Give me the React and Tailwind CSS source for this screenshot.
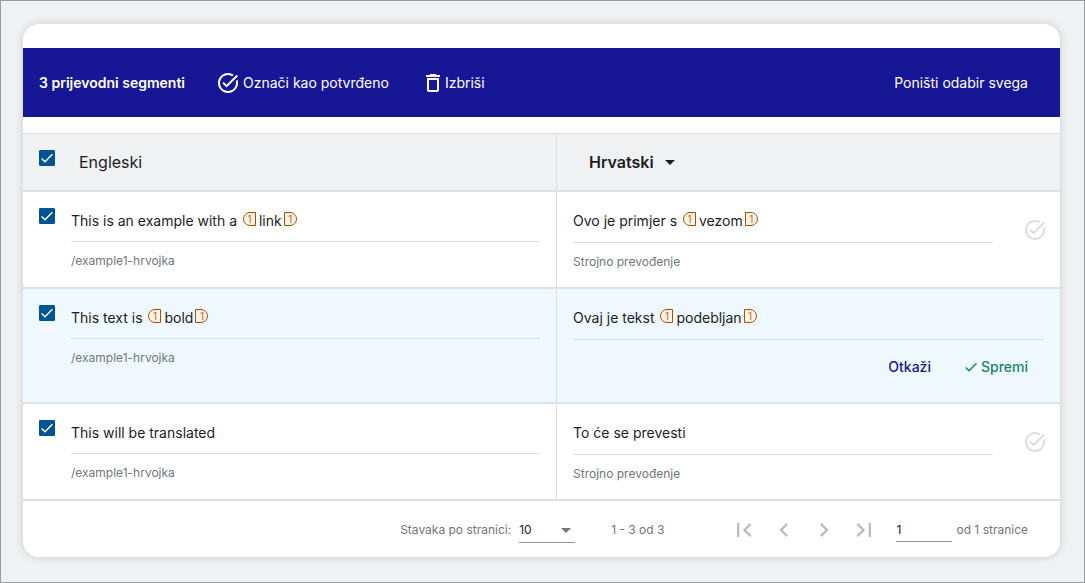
import React, { useState } from 'react';
import {
  MdTaskAlt,
  MdDeleteOutline,
  MdCheck,
  MdArrowDropDown,
  MdFirstPage,
  MdChevronLeft,
  MdChevronRight,
  MdLastPage,
} from 'react-icons/md';

const segments = [
  {
    id: 1,
    source: ['This is an example with a ', 'link'],
    target: ['Ovo je primjer s ', 'vezom'],
    path: '/example1-hrvojka',
    status: 'Strojno prevođenje',
  },
  {
    id: 2,
    source: ['This text is ', 'bold'],
    target: ['Ovaj je tekst ', 'podebljan'],
    path: '/example1-hrvojka',
    editing: true,
  },
  {
    id: 3,
    source: ['This will be translated'],
    target: ['To će se prevesti'],
    path: '/example1-hrvojka',
    status: 'Strojno prevođenje',
  },
];

function Checkbox({ label, checked, onChange }) {
  return (
    <label className="grid h-4 w-4 shrink-0 cursor-pointer">
      <input
        type="checkbox"
        aria-label={label}
        checked={checked}
        onChange={onChange}
        className="col-start-1 row-start-1 h-4 w-4 appearance-none rounded-[1px] border border-[#005493] bg-white checked:bg-[#005493]"
      />
      <svg viewBox="0 0 16 16" className="pointer-events-none col-start-1 row-start-1 h-4 w-4" fill="none" stroke="white" strokeWidth="1.4">
        <path d="M2.6 8.4 6 11.8 13.4 4.2" />
      </svg>
    </label>
  );
}

function Tag({ closing }) {
  return (
    <span
      className={`inline-flex h-[14px] w-[13px] items-center justify-center border border-[#a35200] bg-[#fef2e6] align-text-top text-[10px] leading-none text-[#b96a26] ${
        closing ? 'ml-[2px] rounded-r-full' : 'ml-[2px] mr-[3px] rounded-l-full'
      }`}
    >
      1
    </span>
  );
}

function SegmentText({ parts }) {
  const [text, tagged] = parts;
  return (
    <p className="text-sm leading-6 text-[#1b1d1f]">
      {text}
      {tagged && (
        <>
          <Tag />
          {tagged}
          <Tag closing />
        </>
      )}
    </p>
  );
}

function Row({ segment, checked, onToggle }) {
  const { source, target, path, status, editing } = segment;
  return (
    <tr className={editing ? 'bg-[#eff8ff]' : 'bg-white'}>
      <td className="border-r border-b-2 border-r-[#dcdde1] border-b-[#dfe0e4] px-4 pt-4 pb-3 align-top">
        <div className="flex gap-4">
          <Checkbox label={source.join('')} checked={checked} onChange={onToggle} />
          <div className="min-w-0 flex-1">
            <div className="border-b border-[#dcdde1] pt-px pb-2">
              <SegmentText parts={source} />
            </div>
            <p className="pt-[7px] text-xs leading-6 text-[#6f777b]">{path}</p>
          </div>
        </div>
      </td>
      <td className={`border-b-2 border-[#dfe0e4] pt-4 pb-[13px] pl-4 align-top ${editing ? 'pr-4' : 'pr-[13px]'}`}>
        <div className="flex gap-[30px]">
          <div className="min-w-0 flex-1">
            <div className="border-b border-[#dcdde1] pt-px pb-[9px]">
              <SegmentText parts={target} />
            </div>
            {status && <p className="pt-[7px] text-xs leading-6 text-[#6f777b]">{status}</p>}
            {editing && (
              <div className="flex justify-end gap-8 pt-[15px] pr-4 pb-[10px] text-sm leading-6 font-medium">
                <button type="button" className="text-[#171796]">Otkaži</button>
                <button type="button" className="flex items-center gap-0.5 text-[#17856b]">
                  <MdCheck className="h-4 w-4" />
                  Spremi
                </button>
              </div>
            )}
          </div>
          {!editing && (
            <button type="button" aria-label="Označi kao potvrđeno" className="mt-[10px] h-6 w-6 shrink-0 text-[#dcdde1]">
              <MdTaskAlt className="h-6 w-6" />
            </button>
          )}
        </div>
      </td>
    </tr>
  );
}

function PageButton({ label, icon: Icon }) {
  return (
    <button type="button" aria-label={label} className="flex h-10 w-10 items-center justify-center text-[#bdbdbd]">
      <Icon className="h-7 w-7" />
    </button>
  );
}

export default function App() {
  const [selected, setSelected] = useState([1, 2, 3]);
  const [pageSize, setPageSize] = useState('10');
  const [page, setPage] = useState('1');

  const toggle = (id) =>
    setSelected((prev) => (prev.includes(id) ? prev.filter((s) => s !== id) : [...prev, id]));
  const allSelected = selected.length === segments.length;

  return (
    <div className="min-h-screen border border-[#9b9b9b] bg-[#f0f1f3] pt-[23px] pr-6 pb-6 pl-[22px] font-['Inter',sans-serif]">
      <div className="overflow-hidden rounded-2xl bg-white pt-6 shadow-[0_0_8px_rgba(0,0,0,0.16)]">
        <div className="flex items-center bg-[#171796] pt-[23px] pr-8 pb-[22px] pl-4 text-sm leading-6 text-white">
          <span className="font-semibold">{selected.length} prijevodni segmenti</span>
          <button type="button" className="ml-[31px] flex items-center gap-[3px]">
            <MdTaskAlt className="h-6 w-6" />
            Označi kao potvrđeno
          </button>
          <button type="button" className="ml-8 flex items-center">
            <MdDeleteOutline className="h-6 w-6" />
            Izbriši
          </button>
          <button type="button" className="ml-auto" onClick={() => setSelected([])}>
            Poništi odabir svega
          </button>
        </div>

        <table className="mt-4 w-full table-fixed border-separate border-spacing-0 border-t border-[#dcdde1]">
          <colgroup>
            <col className="w-[51.5%]" />
            <col />
          </colgroup>
          <thead>
            <tr className="bg-[#f0f1f3] text-left text-base leading-6">
              <th className="border-r border-b-2 border-r-[#dcdde1] border-b-[#dfe0e4] p-4 font-normal text-[#1b1d1f]">
                <div className="flex gap-6">
                  <Checkbox
                    label="Odaberi sve"
                    checked={allSelected}
                    onChange={() => setSelected(allSelected ? [] : segments.map((s) => s.id))}
                  />
                  Engleski
                </div>
              </th>
              <th className="border-b-2 border-[#dfe0e4] px-8 py-4 font-semibold text-[#1b1d1f]">
                <button type="button" className="flex items-center gap-1">
                  Hrvatski
                  <MdArrowDropDown className="h-6 w-6" />
                </button>
              </th>
            </tr>
          </thead>
          <tbody>
            {segments.map((s) => (
              <Row key={s.id} segment={s} checked={selected.includes(s.id)} onToggle={() => toggle(s.id)} />
            ))}
          </tbody>
        </table>

        <div className="flex items-center justify-end pt-[9px] pr-8 pb-[7px] text-xs text-[#757575]">
          <label htmlFor="page-size">Stavaka po stranici:</label>
          <div className="ml-2 grid w-14 border-b border-[#949494]">
            <select
              id="page-size"
              value={pageSize}
              onChange={(e) => setPageSize(e.target.value)}
              className="col-start-1 row-start-1 h-6 w-full appearance-none text-xs text-[#212121]"
            >
              <option>10</option>
              <option>25</option>
              <option>50</option>
            </select>
            <MdArrowDropDown className="pointer-events-none col-start-1 row-start-1 -mr-[3px] h-6 w-6 justify-self-end" />
          </div>
          <span className="ml-9">1 - 3 od 3</span>
          <div className="ml-[60px] flex">
            <PageButton label="Prva stranica" icon={MdFirstPage} />
            <PageButton label="Prethodna stranica" icon={MdChevronLeft} />
            <PageButton label="Sljedeća stranica" icon={MdChevronRight} />
            <PageButton label="Zadnja stranica" icon={MdLastPage} />
          </div>
          <input
            type="text"
            aria-label="Stranica"
            value={page}
            onChange={(e) => setPage(e.target.value)}
            className="ml-3 h-6 w-14 border-b border-[#949494] text-xs text-[#1d0a3a] outline-none"
          />
          <span className="ml-1">od 1 stranice</span>
        </div>
      </div>
    </div>
  );
}
